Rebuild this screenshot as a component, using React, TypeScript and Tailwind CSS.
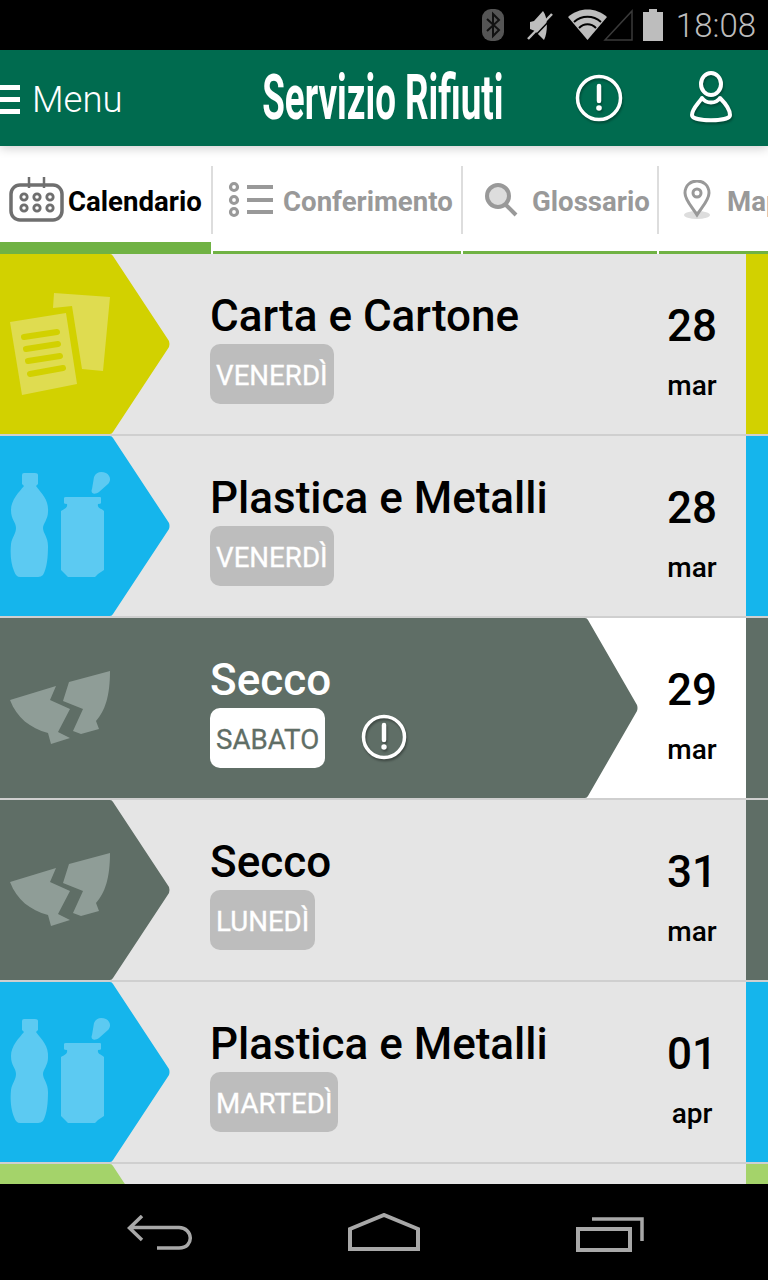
const font = "font-['Roboto',sans-serif]";

function StatusBar() {
  return (
    <div className="h-[50px] bg-black flex items-center justify-end pr-[12px] shrink-0">
      <svg width="24" height="34" viewBox="0 0 24 34" className="mr-[21px] shrink-0">
        <rect x="1" y="1" width="22" height="32" rx="9" fill="#555" />
        <path d="M6 11 L18 22 L12 28 V6 L18 12 L6 23" fill="none" stroke="#111" strokeWidth="2" />
      </svg>
      <svg width="28" height="32" viewBox="0 0 28 32" className="mr-[14px] shrink-0">
        <path d="M4 13 L8 12 L17 2 C22 8 22 24 18 31 L9 22 L4 20 Z" fill="#bdbdbd" />
        <path d="M2 30 L26 5" stroke="#bdbdbd" strokeWidth="2.5" />
        <path d="M6 30 L26 9" stroke="#000" strokeWidth="1.5" />
      </svg>
      <svg width="66" height="34" viewBox="0 0 66 34" className="mr-[8px] shrink-0">
        <path d="M0 9 C11 -1 28 -1 39 9 L19.5 32 Z" fill="#bdbdbd" />
        <path d="M6 14 C14 7 25 7 33 14 M11 20 C16 15 23 15 28 20" fill="none" stroke="#000" strokeWidth="2" />
        <path d="M37 32 L64 3 V32 Z" fill="none" stroke="#3a3a3a" strokeWidth="1.5" />
      </svg>
      <svg width="22" height="32" viewBox="0 0 22 32" className="mr-[12px] shrink-0">
        <path d="M7 0 H15 V3 H21 V32 H1 V3 H7 Z" fill="#bdbdbd" />
      </svg>
      <span className={`${font} font-light text-[33px] leading-none text-[#bdbdbd]`}>18:08</span>
    </div>
  );
}

function Header() {
  return (
    <div className="h-[96px] bg-[#006b4f] flex items-center shrink-0 shadow-[0_2px_10px_rgba(0,0,0,0.2)] relative z-10">
      <div className="w-[258px] flex items-center gap-[12px]">
        <div className="w-[20px] h-[29px] flex flex-col justify-between mt-[3px]">
          <div className="h-[5px] bg-white" />
          <div className="h-[5px] bg-white" />
          <div className="h-[5px] bg-white" />
        </div>
        <span className={`${font} font-light text-[36.5px] leading-none text-white mt-[4px]`}>Menu</span>
      </div>
      <div className="w-[250px] flex justify-center -mt-[2px]">
        <span className={`${font} font-bold text-[63px] leading-none text-white whitespace-nowrap scale-x-[0.583]`}>Servizio Rifiuti</span>
      </div>
      <svg width="52" height="52" viewBox="0 0 52 52" className="ml-[65px] shrink-0 drop-shadow-[1px_2px_1px_rgba(0,0,0,0.3)]">
        <circle cx="26" cy="26" r="21.5" fill="none" stroke="#fff" strokeWidth="3.5" />
        <path d="M26 14 V29" stroke="#fff" strokeWidth="4.5" strokeLinecap="round" />
        <circle cx="26" cy="36" r="2.8" fill="#fff" />
      </svg>
      <svg width="48" height="54" viewBox="0 0 48 54" className="ml-[63px] shrink-0 drop-shadow-[1px_2px_1px_rgba(0,0,0,0.3)]">
        <ellipse cx="23" cy="13" rx="10" ry="11" fill="none" stroke="#fff" strokeWidth="4" />
        <path d="M14 27 C10 33 4 38 4 44 C4 51 42 51 42 44 C42 38 37 32 32 27 C28 33 18 33 14 27 Z" fill="none" stroke="#fff" strokeWidth="4" strokeLinejoin="round" />
      </svg>
    </div>
  );
}

function CalIcon() {
  return (
    <svg width="56" height="48" viewBox="0 0 56 48" className="shrink-0 blur-[0.6px]">
      <rect x="2" y="9" width="51" height="35" rx="9" fill="none" stroke="#6f6f6f" strokeWidth="3.5" />
      <path d="M20 1 V12 M35 1 V12" stroke="#6f6f6f" strokeWidth="2.5" />
      {[15, 28, 41].map((x) =>
        [21, 32].map((y) => <circle key={`${x}${y}`} cx={x} cy={y} r="3.2" fill="none" stroke="#6f6f6f" strokeWidth="2.8" />)
      )}
    </svg>
  );
}

function ListIcon() {
  return (
    <svg width="46" height="38" viewBox="0 0 46 38" className="shrink-0 blur-[0.6px]">
      {[6, 19, 31].map((y) => (
        <circle key={y} cx="6" cy={y} r="3.5" fill="none" stroke="#999" strokeWidth="3.2" />
      ))}
      {[6, 19, 31].map((y) => (
        <path key={y} d={`M19 ${y} H45`} stroke="#999" strokeWidth="4" />
      ))}
    </svg>
  );
}

function SearchIcon() {
  return (
    <svg width="34" height="36" viewBox="0 0 34 36" className="shrink-0 blur-[0.6px]">
      <circle cx="14" cy="14" r="11" fill="#ddd" stroke="#999" strokeWidth="4" />
      <path d="M22 23 L32 33" stroke="#999" strokeWidth="4" />
    </svg>
  );
}

function PinIcon() {
  return (
    <svg width="30" height="40" viewBox="0 0 30 40" className="shrink-0 blur-[0.6px]">
      <ellipse cx="15" cy="35" rx="13" ry="4" fill="#ddd" />
      <path d="M15 35 C10 27 3 20 3 13 C3 5 9 1 15 1 C21 1 27 5 27 13 C27 20 20 27 15 35 Z" fill="none" stroke="#999" strokeWidth="3" />
      <circle cx="15" cy="13" r="4" fill="none" stroke="#999" strokeWidth="3" />
    </svg>
  );
}

function Tab({ w, active, label, icon, gap, pl }: { w: string; active?: boolean; label: string; icon: React.ReactNode; gap: string; pl: string }) {
  return (
    <div className={`${w} shrink-0 h-full flex flex-col`}>
      <div className={`flex-1 flex items-center ${pl} ${gap} mt-[20px] mb-[8px] h-[68px] whitespace-nowrap`}>
        {icon}
        <span className={`${font} font-bold text-[27.6px] leading-none mt-[4px] ${active ? "text-black" : "text-[#999]"}`}>{label}</span>
      </div>
      <div className={active ? "h-[12px] bg-[#70b244]" : "h-[3px] mt-[9px] bg-[#70b244]"} />
    </div>
  );
}

function Sep() {
  return <div className="w-[2px] h-[68px] mt-[20px] bg-[#ddd] shrink-0" />;
}

function Tabs() {
  return (
    <div className="h-[108px] bg-white flex shrink-0 overflow-hidden">
      <Tab w="w-[211px]" active label="Calendario" icon={<CalIcon />} pl="pl-[9px]" gap="gap-[3px]" />
      <Sep />
      <Tab w="w-[248px]" label="Conferimento" icon={<ListIcon />} pl="pl-[15px]" gap="gap-[9px]" />
      <Sep />
      <Tab w="w-[194px]" label="Glossario" icon={<SearchIcon />} pl="pl-[21px]" gap="gap-[14px]" />
      <Sep />
      <Tab w="w-[120px]" label="Mappa" icon={<PinIcon />} pl="pl-[23px]" gap="gap-[15px]" />
    </div>
  );
}

function PaperIcon() {
  return (
    <svg width="104" height="104" viewBox="0 0 104 104" className="absolute left-[10px] top-[39px]" fill="#dfdc50">
      <path d="M44 0 L100 4 L93 78 L72 76 L62 13 L43 15 Z" />
      <path d="M0 29 L56 20 L67 91 L12 102 Z" />
      <path d="M14 44 L47 39 M16 56 L48 51 M18 68 L50 63 M20 81 L53 75" stroke="#d2d100" strokeWidth="6" strokeLinecap="round" fill="none" />
    </svg>
  );
}

function BottleIcon() {
  return (
    <svg width="104" height="108" viewBox="0 0 104 108" className="absolute left-[10px] top-[36px]" fill="#5ccaf2">
      <path d="M12 3 Q12 1 14 1 H25 Q28 1 28 3 V12 L26 14 C32 22 39 28 38 40 C38 47 33 52 33 56 C33 61 38 65 38 74 C38 85 37 96 33 103 Q31 105 28 105 H10 Q6 105 4 99 C1 92 0 82 1 72 C2 65 6 62 6 56 C6 50 1 48 1 38 C1 28 9 20 14 14 L12 12 Z" />
      <path d="M54 26 Q54 25 56 25 H90 Q91 25 91 26 V31 Q91 32 88 32 C87 36 91 36 94 39 V98 L88 102 L85 105 H58 L55 102 L51 98 V39 C54 37 58 36 57 32 Q54 32 54 31 Z" />
      <path d="M84 5 C86 0 91 -1 96 1 C101 4 101 9 98 12 L89 20 C85 23 80 22 82 17 Z" />
    </svg>
  );
}

function ShardIcon() {
  return (
    <svg width="102" height="78" viewBox="0 0 102 78" className="absolute left-[10px] top-[53px]" fill="#8f9d97">
      <path d="M59 11 L100 0 C100 25 95 40 86 50 L89 58 L71 63 L63 60 L73 38 L53 30 L59 11 Z" />
      <path d="M0 29 L46 15 L40 29 L60 38 L48 61 L60 67 L41 73 L38 62 C20 57 7 47 0 29 Z" />
    </svg>
  );
}

function Arrow({ color, w = 170, slope = 60 }: { color: string; w?: number; slope?: number }) {
  const s = w - slope;
  return (
    <svg width={w} height="180" viewBox={`0 0 ${w} 180`} className="block shrink-0">
      <path d={`M0 0 H${s} Q${s + 2} 0 ${s + 3} 2 L${w - 1} 87 Q${w} 90 ${w - 1} 93 L${s + 3} 178 Q${s + 2} 180 ${s} 180 H0 Z`} fill={color} />
    </svg>
  );
}

type R = { title: string; day: string; num: string; mon: string; color: string; icon: React.ReactNode; hl?: boolean };

const rows: R[] = [
  { title: "Carta e Cartone", day: "VENERDÌ", num: "28", mon: "mar", color: "#d2d100", icon: <PaperIcon /> },
  { title: "Plastica e Metalli", day: "VENERDÌ", num: "28", mon: "mar", color: "#15b5ec", icon: <BottleIcon /> },
  { title: "Secco", day: "SABATO", num: "29", mon: "mar", color: "#5f6e66", icon: <ShardIcon />, hl: true },
  { title: "Secco", day: "LUNEDÌ", num: "31", mon: "mar", color: "#5f6e66", icon: <ShardIcon /> },
  { title: "Plastica e Metalli", day: "MARTEDÌ", num: "01", mon: "apr", color: "#15b5ec", icon: <BottleIcon /> },
];

function Body({ r }: { r: R }) {
  return (
    <div className="pt-[39px]">
      <div className={`${font} font-medium text-[44px] leading-[46px] h-[51px] whitespace-nowrap ${r.hl ? "text-white" : "text-black"}`}>{r.title}</div>
      <div className="flex items-center">
        <div className={`${font} h-[60px] rounded-[10px] px-[6px] pt-[3px] flex items-center text-[27.7px] [-webkit-text-stroke:0.3px] ${r.hl ? "bg-white text-[#5f6e66]" : "bg-[#bdbdbd] text-white"}`}>{r.day}</div>
        {r.hl && (
          <svg width="48" height="48" viewBox="0 0 48 48" className="ml-[35px] -mt-[3px] shrink-0 drop-shadow-[1px_2px_1px_rgba(0,0,0,0.35)]">
            <circle cx="24" cy="24" r="20.5" fill="none" stroke="#fff" strokeWidth="3.5" />
            <path d="M24 12 V27" stroke="#fff" strokeWidth="4.5" strokeLinecap="round" />
            <circle cx="24" cy="34" r="2.7" fill="#fff" />
          </svg>
        )}
      </div>
    </div>
  );
}

function Row({ r }: { r: R }) {
  return (
    <div className={`h-[180px] flex shrink-0 ${r.hl ? "bg-white" : "bg-[#e5e5e5]"}`}>
      {r.hl ? (
        <div className="w-[638px] flex shrink-0">
          <div className="relative flex-1 pl-[210px]" style={{ backgroundColor: r.color }}>
            {r.icon}
            <Body r={r} />
          </div>
          <Arrow color={r.color} w={53} slope={53} />
        </div>
      ) : (
        <div className="w-[638px] flex shrink-0">
          <div className="relative w-[170px] shrink-0">
            <Arrow color={r.color} />
            {r.icon}
          </div>
          <div className="ml-[40px]">
            <Body r={r} />
          </div>
        </div>
      )}
      <div className={`${font} w-[108px] shrink-0 flex flex-col items-center text-black`}>
        <span className="text-[44px] font-medium leading-none mt-[50px]">{r.num}</span>
        <span className="text-[28px] font-medium leading-none mt-[24px]">{r.mon}</span>
      </div>
      <div className="w-[22px] shrink-0" style={{ backgroundColor: r.color }} />
    </div>
  );
}

function NavBar() {
  return (
    <div className="h-[96px] bg-black flex items-center shrink-0 pl-[127px] gap-[155px]">
      <svg width="66" height="36" viewBox="0 0 66 36" fill="none" stroke="#a8a8a8" strokeWidth="3.5" className="shrink-0 mt-[2px]">
        <path d="M15 1 L2.5 13 L15 25 M3 12.5 H52 C66 12.5 68 33 52 33 H30" />
      </svg>
      <svg width="72" height="38" viewBox="0 0 72 38" fill="none" stroke="#a8a8a8" strokeWidth="4" className="shrink-0">
        <path d="M2 36 V16 L36 2 L70 16 V36 Z" />
      </svg>
      <svg width="68" height="36" viewBox="0 0 68 36" fill="none" stroke="#a8a8a8" className="shrink-0 ml-[1px] mt-[3px]">
        <rect x="2" y="13" width="52" height="21" strokeWidth="4" />
        <path d="M16 3 H66 V25" strokeWidth="3.5" />
      </svg>
    </div>
  );
}

export default function App() {
  return (
    <div className="w-[768px] h-[1280px] flex flex-col overflow-hidden bg-black">
      <StatusBar />
      <Header />
      <Tabs />
      <div className="flex-1 flex flex-col gap-[2px] bg-[#cfcfcf] overflow-hidden">
        {rows.map((r, i) => (
          <Row key={i} r={r} />
        ))}
        <div className="h-[180px] flex shrink-0 bg-[#e5e5e5]">
          <div className="w-[746px] shrink-0">
            <Arrow color="#a4d36a" />
          </div>
          <div className="w-[22px] shrink-0 bg-[#a4d36a]" />
        </div>
      </div>
      <NavBar />
    </div>
  );
}
